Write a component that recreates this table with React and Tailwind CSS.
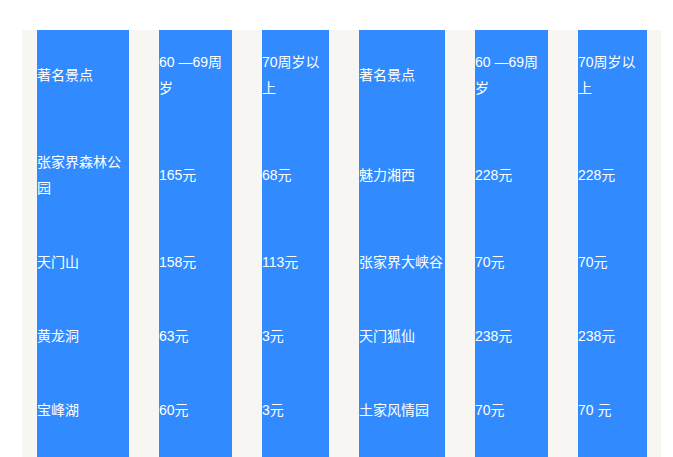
const header = ["著名景点", "60 —69周岁", "70周岁以上", "著名景点", "60 —69周岁", "70周岁以上"];

const rows = [
  ["张家界森林公园", "165元", "68元", "魅力湘西", "228元", "228元"],
  ["天门山", "158元", "113元", "张家界大峡谷", "70元", "70元"],
  ["黄龙洞", "63元", "3元", "天门狐仙", "238元", "238元"],
  ["宝峰湖", "60元", "3元", "土家风情园", "70元", "70 元"],
  ["", "", "", "", "", ""],
];

const App = () => {
  return (
    <div
      className="h-[457px] overflow-hidden bg-white pt-[30px] pl-[22px] pr-[12px]"
      style={{ fontFamily: '"Liberation Sans", "Noto Sans CJK SC", sans-serif' }}
    >
      {/* Table */}
      <div className="bg-[#f7f6f2] pl-[15px] pr-[14px] h-[440px]">
        <div className="grid grid-cols-[92px_73px_67px_86px_73px_69px] gap-x-[30px] text-[14px] leading-[26px] text-white">
          {header.map((h, i) => (
            <div key={"h" + i} className="bg-[#318bfe] pt-[19px] pb-[24px] h-[95px] flex items-center">
              <span>{h}</span>
            </div>
          ))}
          {rows.map((row, r) =>
            row.map((c, i) => (
              <div
                key={r + "-" + i}
                className={
                  r === 0
                    ? "bg-[#318bfe] h-[100px] flex items-center"
                    : "bg-[#318bfe] h-[74px] flex items-center"
                }
              >
                <span>{c}</span>
              </div>
            ))
          )}
        </div>
      </div>
    </div>
  );
};

export default App;
